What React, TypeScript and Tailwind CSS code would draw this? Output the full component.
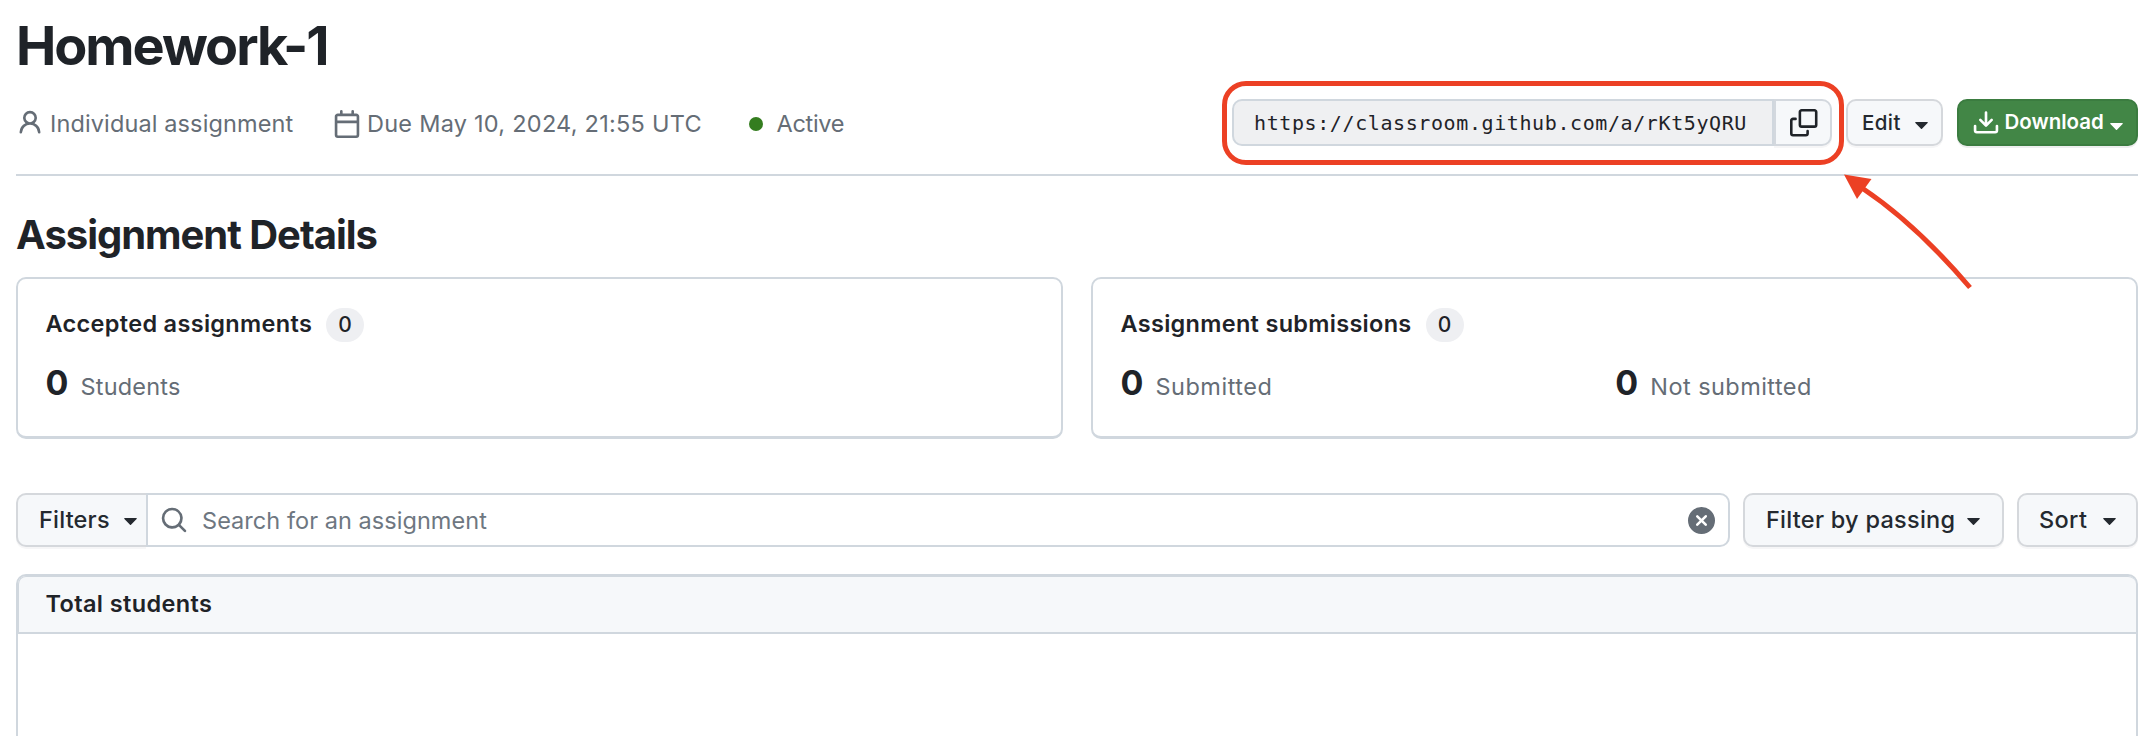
type IconProps = { paths: string[]; className?: string };

const Icon = ({ paths, className = '' }: IconProps) => (
  <svg viewBox="0 0 16 16" fill="currentColor" className={`shrink-0 ${className}`} aria-hidden="true">
    {paths.map((d) => (
      <path key={d} d={d} fillRule="evenodd" />
    ))}
  </svg>
);

const Caret = ({ className = '' }: { className?: string }) => (
  <svg viewBox="0 0 13 7" fill="currentColor" className={`h-[7px] w-[13px] shrink-0 ${className}`} aria-hidden="true">
    <path d="M0.9 0H12.1C12.8 0 13 .7 12.6 1.1L7 6.7C6.7 7 6.3 7 6 6.7L.4 1.1C0 .7 .2 0 .9 0Z" />
  </svg>
);

const PERSON = [
  'M10.561 8.073a6.005 6.005 0 0 1 3.432 5.142.75.75 0 1 1-1.498.07 4.5 4.5 0 0 0-8.99 0 .75.75 0 0 1-1.498-.07 6.004 6.004 0 0 1 3.431-5.142 3.999 3.999 0 1 1 5.123 0ZM10.5 5a2.5 2.5 0 1 0-5 0 2.5 2.5 0 0 0 5 0Z',
];
const CALENDAR = [
  'M4.75 0a.75.75 0 0 1 .75.75V2h5V.75a.75.75 0 0 1 1.5 0V2h1.25c.966 0 1.75.784 1.75 1.75v10.5A1.75 1.75 0 0 1 13.25 16H2.75A1.75 1.75 0 0 1 1 14.25V3.75C1 2.784 1.784 2 2.75 2H4V.75A.75.75 0 0 1 4.75 0ZM2.5 7.5v6.75c0 .138.112.25.25.25h10.5a.25.25 0 0 0 .25-.25V7.5Zm10.75-4H2.75a.25.25 0 0 0-.25.25V6h11V3.75a.25.25 0 0 0-.25-.25Z',
];
const COPY = [
  'M0 6.75C0 5.784.784 5 1.75 5h1.5a.75.75 0 0 1 0 1.5h-1.5a.25.25 0 0 0-.25.25v7.5c0 .138.112.25.25.25h7.5a.25.25 0 0 0 .25-.25v-1.5a.75.75 0 0 1 1.5 0v1.5A1.75 1.75 0 0 1 9.25 16h-7.5A1.75 1.75 0 0 1 0 14.25Z',
  'M5 1.75C5 .784 5.784 0 6.75 0h7.5C15.216 0 16 .784 16 1.75v7.5A1.75 1.75 0 0 1 14.25 11h-7.5A1.75 1.75 0 0 1 5 9.25Zm1.75-.25a.25.25 0 0 0-.25.25v7.5c0 .138.112.25.25.25h7.5a.25.25 0 0 0 .25-.25v-7.5a.25.25 0 0 0-.25-.25Z',
];
const DOWNLOAD = [
  'M2.75 14A1.75 1.75 0 0 1 1 12.25v-2.5a.75.75 0 0 1 1.5 0v2.5c0 .138.112.25.25.25h10.5a.25.25 0 0 0 .25-.25v-2.5a.75.75 0 0 1 1.5 0v2.5A1.75 1.75 0 0 1 13.25 14Z',
  'M7.25 7.689V2a.75.75 0 0 1 1.5 0v5.689l1.97-1.969a.749.749 0 1 1 1.06 1.06l-3.25 3.25a.749.749 0 0 1-1.06 0L4.22 6.78a.749.749 0 1 1 1.06-1.06l1.97 1.969Z',
];
const SEARCH = [
  'M10.68 11.74a6 6 0 0 1-7.922-8.982 6 6 0 0 1 8.982 7.922l3.04 3.04a.749.749 0 0 1-.326 1.275.749.749 0 0 1-.734-.215ZM11.5 7a4.499 4.499 0 1 0-8.997 0A4.499 4.499 0 0 0 11.5 7Z',
];
const CLEAR = [
  'M2.343 13.657A8 8 0 1 1 13.658 2.343 8 8 0 0 1 2.343 13.657ZM6.03 4.97a.751.751 0 0 0-1.042.018.751.751 0 0 0-.018 1.042L6.94 8 4.97 9.97a.749.749 0 0 0 .326 1.275.749.749 0 0 0 .734-.215L8 9.06l1.97 1.97a.749.749 0 0 0 1.275-.326.749.749 0 0 0-.215-.734L9.06 8l1.97-1.97a.749.749 0 0 0-.326-1.275.749.749 0 0 0-.734.215L8 6.94Z',
];

const Counter = ({ value }: { value: number }) => (
  <span className="flex h-[34px] w-[38px] items-center justify-center rounded-full bg-[#eeeff2] text-[21px] leading-[34px] font-medium">
    {value}
  </span>
);

const Stat = ({ value, label, spacing }: { value: number; label: string; spacing: string }) => (
  <div className="flex flex-1 items-baseline gap-[14px]">
    <span className="w-[21px] text-[34px] leading-[40px] font-[650] tracking-[-0.5px]">{value}</span>
    <span className={`text-[23.5px] leading-[40px] text-[#656d76] ${spacing}`}>{label}</span>
  </div>
);

export default function App() {
  return (
    <main className="relative h-[736px] w-[2156px] overflow-hidden bg-white pr-[18px] pl-4 font-['Inter',sans-serif] text-[#1f2328]">
      <header className="border-b-2 border-[#d0d7de] pb-[28px]">
        <h1 className="h-[99px] text-[54px] leading-[91px] font-[650] tracking-[-2.05px]">Homework-1</h1>
        <div className="flex h-[47px] items-center justify-between">
          <div className="flex h-full items-center pt-[2px] text-[23.5px] leading-[45px] text-[#656d76]">
            <Icon paths={PERSON} className="-mt-[2px] size-[28px]" />
            <span className="ml-[6px] w-[283px] tracking-[0.12px]">Individual assignment</span>
            <Icon paths={CALENDAR} className="size-[28px]" />
            <span className="ml-[6px] w-[381.5px] tracking-[0.25px]">Due May 10, 2024, 21:55 UTC</span>
            <span className="size-[14px] rounded-full bg-[#347d1f]" />
            <span className="ml-[14px] tracking-[-0.3px]">Active</span>
          </div>

          <div className="flex items-center gap-[14px]">
            <div className="relative flex h-[47px] w-[600px]">
              <div className="flex w-[542px] items-center rounded-l-[10px] border-2 border-[#d0d7de] bg-[#eff0f2] pl-[20px] font-['DejaVu_Sans_Mono',monospace] text-[20px] tracking-[0.6px]">
                https://classroom.github.com/a/rKt5yQRU
              </div>
              <button className="flex w-[58px] items-center rounded-r-[10px] border-2 border-[#d3d8de] bg-[#f6f8fa] pt-px pl-[14px] shadow-[0_2px_0_rgba(31,35,40,0.04)]">
                <Icon paths={COPY} className="size-[27.5px]" />
              </button>
              <div className="pointer-events-none absolute -top-[18px] -left-[10.5px] h-[84px] w-[622.5px] rounded-[24px] border-[5.5px] border-[#ec4024]" />
            </div>
            <button className="flex h-[47px] w-[97px] items-center rounded-[10px] border-2 border-[#d5d8dc] bg-[#f6f8fa] pl-[14px] text-[20.5px] font-medium tracking-[0.4px] text-[#24292f] shadow-[0_2px_0_rgba(31,35,40,0.04)]">
              <span className="w-[53px] pt-[2px] text-left">Edit</span>
              <Caret className="mt-[5px]" />
            </button>
            <button className="flex h-[47px] w-[181px] items-center rounded-[10px] border-2 border-[#3b7c40] bg-[#428646] pl-[13px] text-[20.5px] font-semibold text-white shadow-[0_2px_0_rgba(31,35,40,0.08)]">
              <Icon paths={DOWNLOAD} className="size-[28px]" />
              <span className="ml-[4.5px] w-[105px] text-left">Download</span>
              <Caret className="mt-[7px]" />
            </button>
          </div>
        </div>
      </header>

      <h2 className="h-[101px] pt-[16px] text-[40px] leading-[85px] font-[650] tracking-[-1.03px]">Assignment Details</h2>

      <section className="grid grid-cols-2 gap-7">
        <article className="h-[162px] rounded-[10px] border-2 border-b-[3px] border-[#d0d7de] pt-[28px] pl-[27.5px]">
          <div className="flex h-[36px] items-center gap-[14px]">
            <h3 className="-mt-[2px] text-[23.5px] leading-[34px] font-semibold tracking-[0.32px]">Accepted assignments</h3>
            <Counter value={0} />
          </div>
          <div className="mt-[20px] flex">
            <Stat value={0} label="Students" spacing="tracking-[0.2px]" />
          </div>
        </article>
        <article className="h-[162px] rounded-[10px] border-2 border-b-[3px] border-[#d0d7de] pt-[28px] pl-[27.5px]">
          <div className="flex h-[36px] items-center gap-[14px]">
            <h3 className="-mt-[2px] text-[23.5px] leading-[34px] font-semibold tracking-[0.3px]">Assignment submissions</h3>
            <Counter value={0} />
          </div>
          <div className="mt-[20px] mr-[26px] flex">
            <Stat value={0} label="Submitted" spacing="tracking-[0.5px]" />
            <Stat value={0} label="Not submitted" spacing="tracking-[0.45px]" />
          </div>
        </article>
      </section>

      <section className="mt-[54px] flex h-[54px] text-[23.5px] font-medium text-[#24292f]">
        <button className="flex w-[130px] items-center rounded-l-[10px] border-2 border-r-0 border-[#d5d8dc] bg-[#f6f8fa] pl-[21px] tracking-[0.2px] shadow-[0_2px_0_rgba(31,35,40,0.04)]">
          <span className="w-[84.5px] text-left">Filters</span>
          <Caret className="mt-[2px]" />
        </button>
        <div className="flex flex-1 items-center rounded-r-[10px] border-2 border-[#d0d7de] pr-[13px] pl-[12px] text-[#6e7781]">
          <Icon paths={SEARCH} className="size-[28px] text-[#656d76]" />
          <span className="ml-[14px] flex-1 pt-[2px] font-normal tracking-[0.05px]">Search for an assignment</span>
          <Icon paths={CLEAR} className="size-[27px] text-[#656d76]" />
        </div>
        <button className="ml-[13px] flex w-[261px] items-center rounded-[10px] border-2 border-[#d5d8dc] bg-[#f6f8fa] pl-[21px] tracking-[0.26px] shadow-[0_2px_0_rgba(31,35,40,0.04)]">
          <span className="w-[201px] text-left">Filter by passing</span>
          <Caret className="mt-[2px]" />
        </button>
        <button className="ml-[13px] flex w-[121px] items-center rounded-[10px] border-2 border-[#d5d8dc] bg-[#f6f8fa] pl-[20px] tracking-[0.35px] shadow-[0_2px_0_rgba(31,35,40,0.04)]">
          <span className="w-[64px] text-left">Sort</span>
          <Caret className="mt-[2px]" />
        </button>
      </section>

      <section className="mt-[27px] h-[190px] rounded-t-[10px] border-2 border-b-0 border-[#d0d7de]">
        <div className="h-[58px] rounded-t-[8px] border-t border-b-2 border-l border-[#d0d7de] bg-[#f6f8fa] pl-[26.5px] text-[23.5px] leading-[54px] font-semibold tracking-[0.37px]">
          Total students
        </div>
      </section>

      <svg viewBox="0 0 130 118" className="pointer-events-none absolute top-[172px] left-[1842px] h-[118px] w-[130px]" aria-hidden="true">
        <path d="M20 16C62 44 96 78 128 115.5" fill="none" stroke="#ec4024" strokeWidth="5" />
        <path d="M2 2.5L29.5 7L15 27Z" fill="#ec4024" />
      </svg>
    </main>
  );
}
